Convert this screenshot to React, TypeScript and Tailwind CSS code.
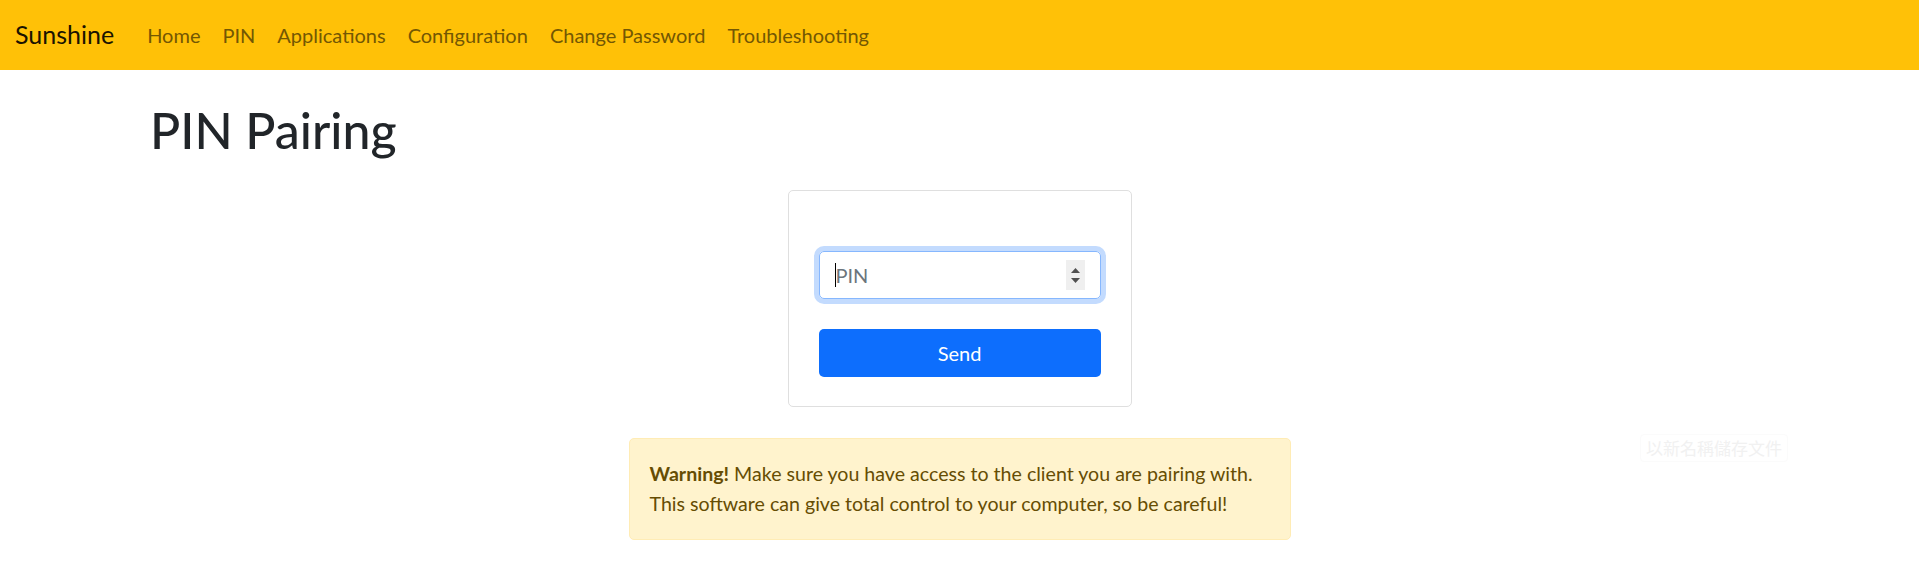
import { useState } from 'react'

// nav items, same order as the original header
const navLinks = ['Home', 'PIN', 'Applications', 'Configuration', 'Change Password', 'Troubleshooting']

const font = { fontFamily: "Lato, 'Noto Sans', sans-serif" }

const App = () => {
  const [pin] = useState('')

  return (
    <div style={font} className="relative min-h-[562px] bg-white text-[#212529]">

      {/* Navbar */}
      <nav className="h-[70px] bg-[#ffc107] flex items-center px-[15px]">
        <span className="text-[25px] text-[#1a1301] mr-[22px]">Sunshine</span>
        <ul className="flex items-center">
          {navLinks.map((l) => (
            <li key={l} className="px-[11px] text-[20px] text-[#735703]">
              {l}
            </li>
          ))}
        </ul>
      </nav>

      {/* Main */}
      <main className="pl-[150px] pr-[150px] pt-[30px]">
        <h1 className="text-[50px] leading-[60px] font-medium">PIN Pairing</h1>

        {/* PIN card */}
        <div className="mt-[30px] mx-auto w-[344px] border border-[#dfdfdf] rounded-[5px] pt-[60px] px-[30px] pb-[29px]">
          <div className="h-[48px] flex items-center border border-[#86b7fe] rounded-[5px] shadow-[0_0_0_5px_#c3dbfe] pl-[15px] pr-[15px]">
            <span className="w-px h-[24px] bg-black" />
            <span className="text-[20px] text-[#6c757d] flex-1">{pin || 'PIN'}</span>
            <span className="w-[19px] h-[30px] bg-[#efefef] flex flex-col items-center justify-center gap-[5px]">
              <svg width="9" height="5" viewBox="0 0 9 5"><path d="M0 5 L4.5 0 L9 5 Z" fill="#505050" /></svg>
              <svg width="9" height="5" viewBox="0 0 9 5"><path d="M0 0 L4.5 5 L9 0 Z" fill="#505050" /></svg>
            </span>
          </div>
          <button className="mt-[30px] w-full h-[48px] rounded-[5px] bg-[#0d6efd] text-white text-[20px]">
            Send
          </button>
        </div>

        {/* Warning */}
        <div className="mt-[31px] mx-auto w-[662px] bg-[#fff3cd] border border-[#ffecb5] rounded-[5px] p-[20px] text-[19.6px] leading-[30px] text-[#664d03]">
          <b className="font-bold">Warning!</b> Make sure you have access to the client you are pairing with.
          <br />
          This software can give total control to your computer, so be careful!
        </div>
      </main>

      {/* faint leftover tooltip */}
      <div
        style={{ fontFamily: "'Noto Sans CJK TC', sans-serif" }}
        className="absolute left-[1640px] top-[434px] px-[5px] py-[1px] rounded-[4px] border border-[#fbfbfb] text-[17px] leading-[24px] text-[#f1f1f1]"
      >
        以新名稱儲存文件
      </div>
    </div>
  )
}

export default App
